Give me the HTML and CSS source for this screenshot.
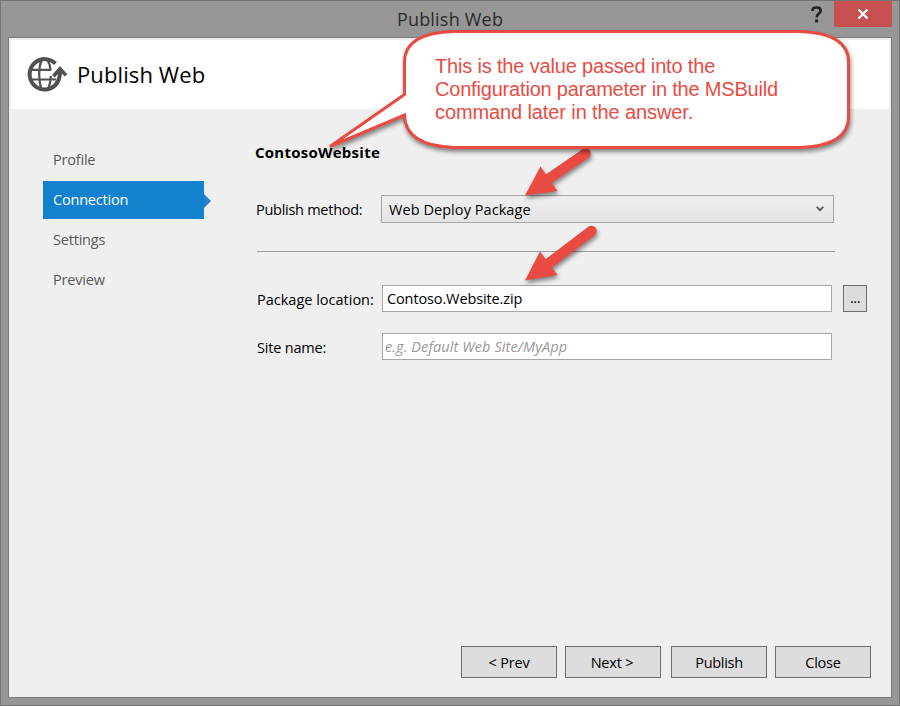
FILE: index.html
```html
<!DOCTYPE html>
<html lang="en">
<head>
    <meta charset="UTF-8">
    <meta name="viewport" content="width=device-width, initial-scale=1.0">
    <title>Publish Web</title>
    <link rel="stylesheet" href="styles.css">
</head>
<body>
    <div class="window">
        <div class="titlebar">
            <span class="title">Publish Web</span>
            <div class="controls">
                <svg class="help" width="12" height="18" viewBox="0 0 12 18">
                    <path d="M1.6 5V4.2C1.6 2.6 3 1.5 5.6 1.5S9.7 2.6 9.7 4.5C9.7 7.4 5.6 7.6 5.6 11.6" fill="none" stroke="#222" stroke-width="2.6"/>
                    <rect x="4.1" y="13.4" width="3" height="3" fill="#222"/>
                </svg>
                <div class="close">
                    <svg width="12" height="10" viewBox="0 0 12 10">
                        <path d="M1.5 .5L10.5 9.5M10.5 .5L1.5 9.5" fill="none" stroke="#fff" stroke-width="2.2"/>
                    </svg>
                </div>
            </div>
        </div>
        <div class="client">
            <header class="header">
                <svg class="logo" width="42" height="38" viewBox="0 0 42 38">
                    <g fill="none" stroke="#505153">
                        <path d="M29.500 8.500A15.200 15.200 0 1 0 25 33.200C31 30.500 34.200 25 34 15" stroke-width="4"/>
                        <path d="M4 14.800H25M4 24.500H30" stroke-width="2.200"/>
                        <path d="M15.500 5C12.400 13 12.400 26 15.500 34.500M21.500 5C23.600 8.500 24.400 12 24.600 15.500M24.800 21C24.600 27 23.500 31 21.500 34.500" stroke-width="2.200"/>
                        <path d="M27.400 21.200L34 13.800L40 20.400" stroke-width="3.600"/>
                    </g>
                </svg>
                <h1>Publish Web</h1>
            </header>
            <main class="main">
                <nav class="steps">
                    <a class="step">Profile</a>
                    <a class="step active">Connection</a>
                    <a class="step">Settings</a>
                    <a class="step">Preview</a>
                </nav>
                <section class="content">
                    <h2>ContosoWebsite</h2>
                    <div class="row method">
                        <label class="label-method">Publish method:</label>
                        <div class="select">
                            <span>Web Deploy Package</span>
                            <svg width="8" height="6" viewBox="0 0 8 6">
                                <path d="M.7 .8L4 4.200L7.300 .8" fill="none" stroke="#555" stroke-width="1.8"/>
                            </svg>
                        </div>
                    </div>
                    <hr>
                    <div class="row">
                        <label>Package location:</label>
                        <div class="input"><span class="value">Contoso.Website.zip</span></div>
                        <div class="browse">...</div>
                    </div>
                    <div class="row site">
                        <label class="label-site">Site name:</label>
                        <div class="input"><span class="placeholder">e.g. Default Web Site/MyApp</span></div>
                    </div>
                </section>
            </main>
            <footer class="footer">
                <div class="button">&lt; Prev</div>
                <div class="button next">Next &gt;</div>
                <div class="button publish">Publish</div>
                <div class="button">Close</div>
            </footer>
        </div>
    </div>

    <!-- annotations drawn over the dialog -->
    <svg class="notes" width="900" height="706" viewBox="0 0 900 706">
        <g class="arrow">
            <path d="M585.500 153.500L544 182" fill="none" stroke="#e94b43" stroke-width="10.500" stroke-linecap="round"/>
            <path d="M525 195.500L540.500 166.500L557.500 191Z" fill="#e94b43"/>
        </g>
        <g class="arrow">
            <path d="M591.500 231L544 267" fill="none" stroke="#e94b43" stroke-width="10.500" stroke-linecap="round"/>
            <path d="M525 280.500L540 251.500L557.500 275Z" fill="#e94b43"/>
        </g>
        <path class="bubble" d="M454 31.500H799Q848.500 33 848.500 62V117Q848.500 146 799 147.500H454Q405 145.500 404.500 115L330 146.500L404.500 94.500V62Q404.500 33 454 31.500Z"/>
    </svg>
    <div class="bubble-text">
        <div class="line1">This is the value passed into the</div>
        <div class="line2">Configuration parameter in the MSBuild</div>
        <div class="line3">command later in the answer.</div>
    </div>
</body>
</html>
```

FILE: styles.css
```css
* {
    box-sizing: border-box;
}
body {
    margin: 0;
    font-family: "Open Sans", "Noto Sans", sans-serif;
    font-size: 14.5px;
    color: #000;
}
.window {
    display: flex;
    flex-direction: column;
    width: 900px;
    height: 706px;
    padding: 0 7px 7px;
    background-color: #979797;
    border: 1px solid #737373;
}
.titlebar {
    position: relative;
    height: 36px;
    padding-top: 5px;
    text-align: center;
}
.title {
    font-size: 18px;
    line-height: 26px;
    letter-spacing: 0.2px;
    color: #2b2b2b;
}
.controls {
    position: absolute;
    top: 0;
    right: 0;
    display: flex;
}
.help {
    margin: 5px 11px 0 0;
}
.close {
    display: flex;
    align-items: center;
    justify-content: center;
    width: 58px;
    height: 26px;
    padding-right: 1px;
    background-color: #c75050;
}
.client {
    display: flex;
    flex-direction: column;
    flex: 1;
    padding: 2px;
    background-color: #efefef;
    border: 1px solid #7b7b7b;
}
.header {
    display: flex;
    height: 69px;
    padding: 15px 0 0 15px;
    background-color: #fff;
}
h1 {
    margin: 1px 0 0 9px;
    font-size: 22px;
    font-weight: normal;
    line-height: 36px;
    letter-spacing: 0.1px;
}
.main {
    display: flex;
    flex: 1;
}
.steps {
    display: flex;
    flex-direction: column;
    gap: 2px;
    width: 161px;
    margin: 32px 51px 0 32px;
}
.step {
    height: 38px;
    padding-left: 10px;
    line-height: 38px;
    letter-spacing: -0.2px;
    color: #595959;
}
.step.active {
    position: relative;
    background-color: #1382ce;
    color: #fff;
}
.step.active::after {
    content: "";
    position: absolute;
    left: 161px;
    top: 13px;
    border: 7px solid transparent;
    border-left-color: #2b80d0;
    border-right-width: 0;
}
.content {
    width: 620px;
    padding-top: 31px;
}
h2 {
    margin: 0;
    font-size: 15px;
    line-height: 24px;
    letter-spacing: 0.25px;
}
.row {
    display: flex;
    align-items: flex-start;
    height: 28px;
    padding-left: 2px;
}
.row label {
    width: 125px;
    line-height: 30px;
    white-space: nowrap;
}
.row .label-method {
    letter-spacing: -0.27px;
}
.row .label-site {
    letter-spacing: -0.2px;
}
.method {
    margin-top: 31px;
    padding-left: 1px;
}
.select {
    display: flex;
    align-items: center;
    justify-content: space-between;
    width: 453px;
    height: 28px;
    padding: 0 9px 0 7px;
    letter-spacing: 0.06px;
    background: linear-gradient(#efefef, #e4e4e4);
    border: 1px solid #a6a6a6;
}
hr {
    width: 578px;
    height: 1px;
    margin: 28px 0 33px 2px;
    background-color: #9b9b9b;
    border: 0;
}
.input {
    width: 450px;
    height: 27px;
    padding-left: 4px;
    line-height: 25px;
    background-color: #fff;
    border: 1px solid #a6a6a6;
}
.value {
    letter-spacing: -0.12px;
}
.placeholder {
    margin-left: -2px;
    font-style: italic;
    letter-spacing: 0.1px;
    color: #999;
}
.browse {
    width: 24px;
    height: 27px;
    margin-left: 11px;
    text-align: center;
    line-height: 24px;
    letter-spacing: -0.5px;
    background-color: #ddd;
    border: 1px solid #6d6d6d;
}
.site {
    margin-top: 20px;
}
.footer {
    display: flex;
    justify-content: flex-end;
    gap: 8px;
    padding: 0 18px 17px 0;
}
.button {
    width: 96px;
    height: 32px;
    text-align: center;
    line-height: 31px;
    letter-spacing: -0.2px;
    background-color: #ddd;
    border: 1px solid #6d6d6d;
}
.next {
    padding-right: 2px;
}
.publish {
    margin-left: 2px;
    letter-spacing: -0.3px;
}
.notes {
    position: absolute;
    top: 0;
    left: 0;
}
.arrow {
    filter: drop-shadow(1px 3px 2px rgba(0, 0, 0, 0.45));
}
.bubble {
    fill: #fff;
    stroke: #e94b43;
    stroke-width: 3;
    filter: drop-shadow(1px 3px 2px rgba(0, 0, 0, 0.45));
}
.bubble-text {
    position: absolute;
    top: 55px;
    left: 435px;
    font-family: "Liberation Sans", Arial, sans-serif;
    font-size: 20px;
    line-height: 23px;
    white-space: nowrap;
    color: #e94b43;
}
.line1 {
    letter-spacing: -0.17px;
}
.line2 {
    letter-spacing: -0.19px;
}
.line3 {
    letter-spacing: -0.11px;
}
```
